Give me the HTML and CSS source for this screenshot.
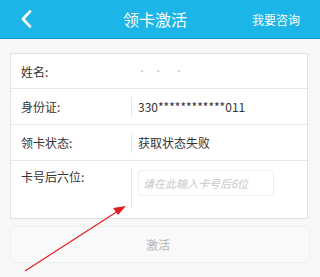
FILE: index.html
```html
<!DOCTYPE html>
<html lang="zh-CN">
<head>
    <meta charset="UTF-8">
    <meta name="viewport" content="width=device-width, initial-scale=1.0">
    <title>领卡激活</title>
    <link rel="stylesheet" href="styles.css">
</head>
<body>
    <header class="topbar">
        <span class="back">
            <svg width="12" height="18" viewBox="0 0 12 18"><path d="M10 1.5 L3 9 L10 16.5" fill="none" stroke="#fff" stroke-width="2.6" stroke-linecap="round" stroke-linejoin="round"/></svg>
        </span>
        <h1 class="title">领卡激活</h1>
        <span class="ask">我要咨询</span>
    </header>

    <div class="panel">
        <div class="row">
            <div class="label">姓名:</div>
            <div class="value blur">· ·&nbsp; ·</div>
        </div>
        <div class="row">
            <div class="label">身份证:</div>
            <div class="value line">330************011</div>
        </div>
        <div class="row">
            <div class="label">领卡状态:</div>
            <div class="value line">获取状态失败</div>
        </div>
        <div class="row tall">
            <div class="label">卡号后六位:</div>
            <div class="value line">
                <input class="code" type="text" placeholder="请在此输入卡号后6位">
            </div>
        </div>
    </div>

    <button class="submit">激活</button>

    <!-- 红色箭头 -->
    <svg class="arrow" width="320" height="277" viewBox="0 0 320 277">
        <line x1="25" y1="271" x2="118" y2="211" stroke="#e02020" stroke-width="1.2"/>
        <polygon points="126,206 113,208 118,215" fill="#e02020"/>
    </svg>
</body>
</html>
```

FILE: styles.css
```css
body {
    margin: 0;
    width: 320px;
    height: 277px;
    overflow: hidden;
    background: #f7f7f7;
    font-family: "Noto Sans CJK SC", "Liberation Sans", sans-serif;
    color: #333;
    position: relative;
}

.topbar {
    height: 38px;
    background: #1bb5e7;
    border-bottom: 1px solid #0e9dd0;
    display: flex;
    align-items: center;
    padding: 0 20px 0 20px;
    color: #fff;
}

.back {
    width: 40px;
    display: flex;
    align-items: center;
}

.title {
    flex: 1;
    margin: 0;
    text-align: center;
    font-size: 16px;
    font-weight: normal;
    padding-left: 4px;
}

.ask {
    width: 54px;
    text-align: right;
    font-size: 12px;
}

.panel {
    margin: 14px 12px 0 10px;
    background: #fff;
    border: 1px solid #e2e2e2;
}

.row {
    display: flex;
    align-items: center;
    height: 34px;
    border-bottom: 1px solid #e6e6e6;
    font-size: 12px;
}

.row:nth-child(2),
.row:nth-child(3) {
    height: 35px;
}

.row.tall {
    height: 57px;
    align-items: flex-start;
    border-bottom: none;
}

.label {
    width: 110px;
    padding-left: 10px;
    flex-shrink: 0;
}

.row.tall .label {
    padding-top: 7px;
}

.value {
    flex: 1;
    padding-left: 6px;
    height: 20px;
    line-height: 20px;
}

.value.line {
    border-left: 1px solid #e8e8e8;
}

.row.tall .value {
    margin-top: 7px;
    height: 38px;
    padding-top: 2px;
}

.blur {
    color: #cfcfcf;
    font-size: 10px;
    letter-spacing: 2px;
}

.code {
    width: 126px;
    height: 24px;
    border: 1px solid #f0f0f0;
    border-radius: 3px;
    padding: 0 4px;
    font-family: inherit;
    font-size: 11px;
    font-style: italic;
    background: #fff;
    outline: none;
}

.code::placeholder {
    color: #c8c8c8;
}

.submit {
    display: block;
    margin: 7px 10px 0 10px;
    width: 300px;
    height: 37px;
    background: #f9f9f9;
    border: 1px solid #efefef;
    border-radius: 4px;
    color: #b5b5b5;
    font-family: inherit;
    font-size: 12px;
    padding-right: 10px;
}

.arrow {
    position: absolute;
    top: 0;
    left: 0;
    pointer-events: none;
}
```
